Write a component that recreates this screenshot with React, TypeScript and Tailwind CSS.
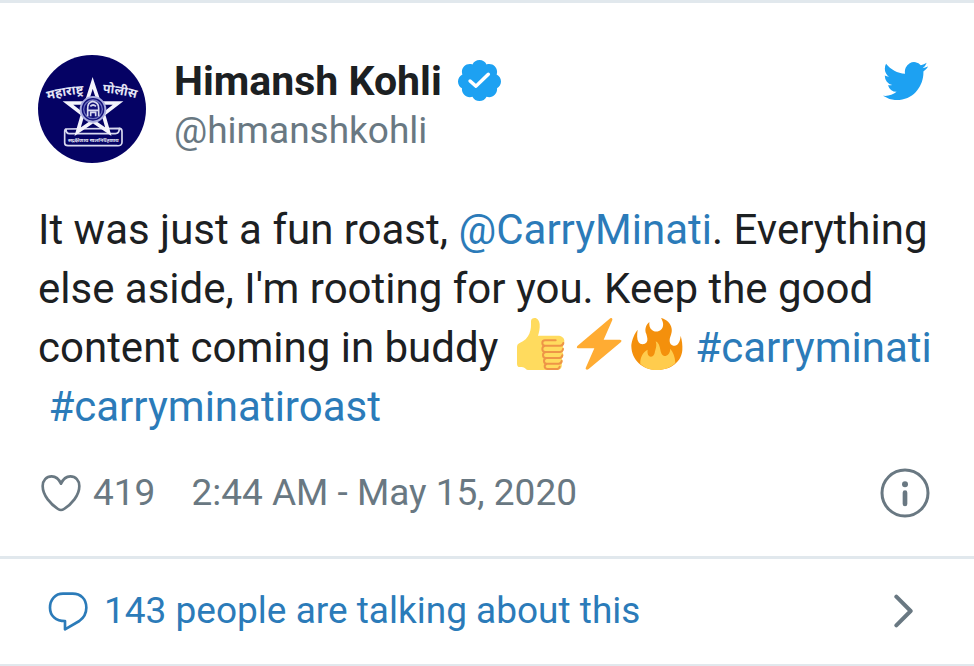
function Avatar() {
  return (
    <svg viewBox="0 0 324 324" className="size-[108px] shrink-0" role="img" aria-label="Himansh Kohli">
      <defs>
        <path id="arcLeft" d="M30 134 Q84 118 170 114" />
        <path id="arcRight" d="M194 113 Q250 116 320 138" />
      </defs>
      <circle cx="162" cy="162" r="162" fill="#050264" />
      <path
        d="M84 222 Q80 222 80 230 V264 Q80 272 90 272 H236 Q252 274 252 262 V230 Q252 220 244 220 M84 222 Q84 236 94 236 H232 Q244 236 244 220 Z"
        fill="none"
        stroke="#d9daf0"
        strokeWidth="5"
      />
      <path d="M164 84 L184 144 H240 L196 178 L211 230 L165 199 L119 230 L134 178 L90 144 H145 Z" fill="#050264" stroke="#f4f4fc" strokeWidth="11" />
      <circle cx="165" cy="163" r="37" fill="#12107a" stroke="#a9acdf" strokeWidth="6" />
      <circle cx="165" cy="163" r="28" fill="none" stroke="#6d71bd" strokeWidth="4" />
      <path d="M149 184 V160 Q148 143 164 139 Q183 142 182 160 V184 M149 166 H182 M158 184 V172 H173 V184 M157 154 Q165 146 174 154" fill="none" stroke="#d9daf0" strokeWidth="5" />
      <g fill="#e4e5f5" fontFamily="'Noto Sans', 'Noto Sans Devanagari', sans-serif" fontWeight="700">
        <text fontSize="38"><textPath href="#arcLeft">महाराष्ट्र</textPath></text>
        <text fontSize="38"><textPath href="#arcRight">पोलीस</textPath></text>
        <text x="166" y="261" fontSize="16" textAnchor="middle">सद्रक्षणाय खलनिग्रहणाय</text>
      </g>
    </svg>
  );
}

function Verified() {
  return (
    <svg viewBox="1.5 1.5 21 22" preserveAspectRatio="none" className="size-[43px] shrink-0" role="img" aria-label="Verified account">
      <path
        fill="#1da1f2"
        d="M22.5 12.5c0-1.58-.875-2.95-2.148-3.6.154-.435.238-.905.238-1.4 0-2.21-1.71-3.998-3.818-3.998-.47 0-.92.084-1.336.25C14.818 2.415 13.51 1.5 12 1.5s-2.816.917-3.437 2.25c-.415-.165-.866-.25-1.336-.25-2.11 0-3.818 1.79-3.818 4 0 .494.083.964.237 1.4-1.272.65-2.147 2.018-2.147 3.6 0 1.495.782 2.798 1.942 3.486-.02.17-.032.34-.032.514 0 2.21 1.708 4 3.818 4 .47 0 .92-.086 1.335-.25.62 1.334 1.926 2.25 3.437 2.25 1.512 0 2.818-.916 3.437-2.25.415.163.865.248 1.336.248 2.11 0 3.818-1.79 3.818-4 0-.174-.012-.344-.033-.513 1.158-.687 1.943-1.99 1.943-3.484z"
      />
      <path d="M7.4 12.2 L10.3 14.9 L16.3 8.8" fill="none" stroke="#fff" strokeWidth="1.7" strokeLinecap="round" strokeLinejoin="round" />
    </svg>
  );
}

function Bird() {
  return (
    <svg viewBox="0 2.2 24 19.5" preserveAspectRatio="none" className="h-[38px] w-[45px]" fill="#1da1f2" aria-hidden="true">
      <path d="M23.953 4.57a10 10 0 01-2.825.775 4.958 4.958 0 002.163-2.723c-.951.555-2.005.959-3.127 1.184a4.92 4.92 0 00-8.384 4.482C7.69 8.095 4.067 6.13 1.64 3.162a4.822 4.822 0 00-.666 2.475c0 1.71.87 3.213 2.188 4.096a4.904 4.904 0 01-2.228-.616v.06a4.923 4.923 0 003.946 4.827 4.996 4.996 0 01-2.212.085 4.936 4.936 0 004.604 3.417 9.867 9.867 0 01-6.102 2.105c-.39 0-.779-.023-1.17-.067a13.995 13.995 0 007.557 2.209c9.053 0 13.998-7.496 13.998-13.985 0-.21 0-.42-.015-.63A9.935 9.935 0 0024 4.59z" />
    </svg>
  );
}

const emoji = "size-[52px]";

function ThumbsUp() {
  return (
    <svg viewBox="44 54 156 156" className={emoji} role="img" aria-label="Thumbs up">
      <path
        fill="#ffdb5e"
        d="M92 64 C92 57 97 54 103 54 C111 54 117 62 118 73 C119 87 116 98 113 107 H172 C183 107 192 113 192 122 C192 128 190 132 186 134 C190 140 191 150 186 155 C190 161 190 171 184 175 C187 180 187 187 184 191 C186 201 181 210 170 210 H83 C78 210 76 206 73 204 C69 200 60 201 55 201 Q50 200 50 190 V142 Q50 132 58 129 C72 123 82 113 87 101 C93 87 92 76 92 64 Z"
      />
      <path
        fill="none"
        stroke="#ee9547"
        strokeWidth="6"
        strokeLinecap="round"
        d="M166 121 H134 Q126 121 126 129 Q126 137 134 137 H180 Q188 136 189 129 M134 137 Q126 139 126 147 Q126 155 134 156 H179 Q187 155 188 147 M136 156 Q128 158 128 165 Q128 174 136 174 H177 Q185 173 186 166 M138 174 Q131 176 131 183 Q131 191 139 191 H175 Q183 190 184 183 M140 191 Q133 193 133 199 Q133 206 141 207 H171 Q177 206 178 200"
      />
    </svg>
  );
}

function Zap() {
  return (
    <svg viewBox="215 54 156 156" className={emoji} role="img" aria-label="High voltage">
      <path
        fill="#ffac33"
        d="M329 54 Q334 54 333 60 L307 119 H356 Q363 120 359 126 L262 207 Q257 211 254 208 Q252 206 254 202 L279 145 H230 Q224 143 228 138 L324 57 Q327 54 329 54 Z"
      />
    </svg>
  );
}

function Fire() {
  return (
    <svg viewBox="392 54 156 156" className={emoji} role="img" aria-label="Fire">
      <path
        fill="#f4900c"
        d="M546 150 C547 136 545 120 541 107 C540 119 536 135 524 137 C514 138 507 131 508 119 C509 108 516 100 514 86 C512 70 498 58 482 54 C488 64 492 77 484 87 C476 96 463 97 456 91 C448 85 446 76 447 66 C436 75 432 90 438 102 C441 112 443 121 439 127 C434 134 420 135 415 127 C409 117 410 103 412 89 C398 106 393 129 393 139 C394 180 426 210 470 210 C513 210 544 184 546 150 Z"
      />
      <path
        fill="#ffcc4d"
        d="M525 189 C524 170 519 158 510 146 C509 158 505 165 496 168 C486 169 482 160 480 149 C478 138 475 128 466 124 C471 138 465 148 463 159 C461 168 452 174 446 168 C441 163 441 155 442 149 C428 156 419 172 420 191 C433 204 450 210 470 210 C491 210 511 203 525 189 Z"
      />
    </svg>
  );
}

const link = "text-[#2b7bb9]";

export default function App() {
  return (
    <article className="w-full border-y-[3px] border-[#e1e8ed] bg-white font-['Roboto','Noto_Sans',sans-serif] text-[#1c2022]">
      <div className="px-[38px] pt-[52px]">
        <header className="flex items-start">
          <Avatar />
          <div className="ml-7 min-w-0 flex-1">
            <a href="#profile" className="flex items-center gap-4">
              <span className="text-[41px] leading-[52px] font-bold">Himansh Kohli</span>
              <Verified />
            </a>
            <a href="#profile" className="block text-[37px] leading-[48px] text-[#697882]">@himanshkohli</a>
          </div>
          <a href="#tweet" aria-label="View on Twitter" className="mt-[7px] mr-2">
            <Bird />
          </a>
        </header>

        <p className="mt-[37px] text-[42px] leading-[59px]">
          It was just a fun roast, <a href="#carryminati-user" className={link}>@CarryMinati</a>. Everything else aside, I'm rooting for you. Keep the good content coming in buddy{" "}
          <span className="mx-[6px] mr-[2px] inline-flex gap-[6px] align-[-8px]"><ThumbsUp /><Zap /><Fire /></span>{" "}
          <a href="#carryminati" className={link}>#carryminati</a>{" "}
          <a href="#carryminatiroast" className={link}>&nbsp;#carryminatiroast</a>
        </p>

        <div className="mt-[31px] flex items-center pb-[37px] text-[37px] leading-[52px] text-[#697882]">
          <button type="button" className="flex items-center gap-3" aria-label="Like, 419 likes">
            <svg viewBox="0 0 120 114" className="ml-[3px] h-[38px] w-10" fill="none" stroke="currentColor" strokeWidth="8" strokeLinejoin="round" aria-hidden="true">
              <path d="M60 29 C53 13 43 7 32 7 C16 7 5 19 5 36 C5 65 30 91 51 105 Q60 111 69 105 C91 91 115 65 115 36 C115 19 104 7 88 7 C77 7 67 13 60 29 Z" />
            </svg>
            <span>419</span>
          </button>
          <a href="#tweet" className="ml-9">2:44 AM - May 15, 2020</a>
          <a href="#info" aria-label="Twitter Ads info and privacy" className="mr-[6px] ml-auto">
            <svg viewBox="0 0 150 150" className="size-[50px]" aria-hidden="true">
              <circle cx="75" cy="75" r="69" fill="none" stroke="currentColor" strokeWidth="9" />
              <circle cx="75" cy="49" r="9" fill="currentColor" />
              <path d="M75 74 V108" stroke="currentColor" strokeWidth="14" strokeLinecap="round" />
            </svg>
          </a>
        </div>
      </div>

      <a href="#conversation" className="flex items-center border-t-[3px] border-[#e1e8ed] pt-[26px] pr-[61px] pb-[27px] pl-12 text-[37px] leading-[52px] text-[#2b7bb9]">
        <svg viewBox="0 0 120 120" className="size-10" fill="none" stroke="currentColor" strokeWidth="8" strokeLinejoin="round" aria-hidden="true">
          <path d="M45 8 H74 C98 8 115 24 115 50 C115 69 106 81 94 90 L51 115 V90 C24 90 6 75 6 50 C6 25 22 8 45 8 Z" />
        </svg>
        <span className="ml-4">143 people are talking about this</span>
        <svg viewBox="0 0 57 102" className="ml-auto h-[34px] w-[19px] text-[#697882]" fill="none" stroke="currentColor" strokeWidth="12" strokeLinecap="round" strokeLinejoin="round" aria-hidden="true">
          <path d="M7 8 L50 51 L7 94" />
        </svg>
      </a>
    </article>
  );
}
